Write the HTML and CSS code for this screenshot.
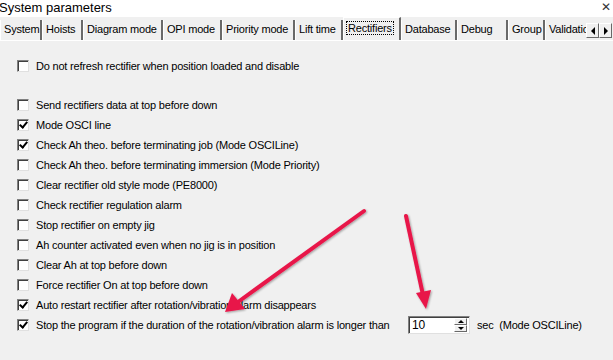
FILE: index.html
```html
<html>
    <head>
        <title>System parameters</title>
        <link rel="stylesheet" href="styles.css">
    </head>
    <body>
        <div class='titlebar'>
            <span class='title'>System parameters</span>
            <span class='close'>&#x2715;</span>
        </div>
        <div class='tabs'>
            <div class='tab' style='width:42px'>System</div>
            <div class='tab' style='width:41px'>Hoists</div>
            <div class='tab' style='width:80px'>Diagram mode</div>
            <div class='tab' style='width:59px'>OPI mode</div>
            <div class='tab' style='width:73px'>Priority mode</div>
            <div class='tab' style='width:48px'>Lift time</div>
            <div class='tab active' style='width:58px'><span class='focus'>Rectifiers</span></div>
            <div class='tab' style='width:56px'>Database</div>
            <div class='tab' style='width:51px'>Debug</div>
            <div class='tab' style='width:37px'>Group</div>
            <div class='tab last'>Validation</div>
            <div class='scroll'>
                <div class='sbtn'><span class='tri-left'></span></div>
                <div class='sbtn'><span class='tri-right'></span></div>
            </div>
        </div>
        <div class='panel'>
            <div class='row'><span class='box'></span>Do not refresh rectifier when position loaded and disable</div>
            <div class='spacer'></div>
            <div class='row'><span class='box'></span>Send rectifiers data at top before down</div>
            <div class='row'><span class='box checked'></span>Mode OSCI line</div>
            <div class='row'><span class='box checked'></span>Check Ah theo. before terminating job (Mode OSCILine)</div>
            <div class='row'><span class='box'></span>Check Ah theo. before terminating immersion (Mode Priority)</div>
            <div class='row'><span class='box'></span>Clear rectifier old style mode (PE8000)</div>
            <div class='row'><span class='box'></span>Check rectifier regulation alarm</div>
            <div class='row'><span class='box'></span>Stop rectifier on empty jig</div>
            <div class='row'><span class='box'></span>Ah counter activated even when no jig is in position</div>
            <div class='row'><span class='box'></span>Clear Ah at top before down</div>
            <div class='row'><span class='box'></span>Force rectifier On at top before down</div>
            <div class='row'><span class='box checked'></span>Auto restart rectifier after rotation/vibration alarm disappears</div>
            <div class='row'>
                <span class='box checked'></span>
                <span class='long'>Stop the program if the duration of the rotation/vibration alarm is longer than</span>
                <div class='spin'>
                    <span class='val'>10</span>
                    <div class='spin-btns'>
                        <div class='sb'><span class='tri-up'></span></div>
                        <div class='sb'><span class='tri-down'></span></div>
                    </div>
                </div>
                <span class='unit'>sec&nbsp; (Mode OSCILine)</span>
            </div>
        </div>
        <svg class='arrows' width='613' height='360' viewBox='0 0 613 360'>
            <defs>
                <filter id='sh' x='-20%' y='-20%' width='140%' height='140%'>
                    <feGaussianBlur in='SourceAlpha' stdDeviation='1.2'/>
                    <feOffset dx='1' dy='1'/>
                    <feComponentTransfer><feFuncA type='linear' slope='0.35'/></feComponentTransfer>
                    <feMerge><feMergeNode/><feMergeNode in='SourceGraphic'/></feMerge>
                </filter>
            </defs>
            <g filter='url(#sh)' fill='#e8174a' stroke='#e8174a'>
                <line x1='364' y1='211' x2='238' y2='302' stroke-width='4' stroke-linecap='round'/>
                <polygon points='225,312 232,293 245,309' stroke='none'/>
                <line x1='406' y1='216' x2='423' y2='295' stroke-width='4' stroke-linecap='round'/>
                <polygon points='426,309 416,293 431,290' stroke='none'/>
            </g>
        </svg>
    </body>
</html>
```

FILE: styles.css
```css
body{
    margin: 0;
    width: 613px;
    height: 360px;
    overflow: hidden;
    background-color: #f0f0f0;
    font-family: "Liberation Sans", Arial, sans-serif;
    font-size: 11px;
    letter-spacing: -0.2px;
    color: #000;
    position: relative;
}

.titlebar{
    height: 17px;
    display: flex;
    align-items: center;
    justify-content: space-between;
    background-color: #fff;
}
.title{
    font-size: 13px;
    letter-spacing: 0;
    margin-left: -1px;
    margin-top: -3px;
}
.close{
    font-size: 12px;
    margin-right: 2px;
    margin-top: -3px;
    color: #333;
}

.tabs{
    display: flex;
    height: 23px;
    align-items: flex-end;
    overflow: hidden;
    border-bottom: 1px solid #fff;
}
.tab{
    box-sizing: border-box;
    height: 20px;
    line-height: 18px;
    padding-left: 3px;
    border-right: 2px solid #696969;
    border-left: 1px solid #fff;
    white-space: nowrap;
    overflow: hidden;
    flex-shrink: 0;
}
.tab.active{
    height: 23px;
    line-height: 19px;
    padding-left: 2px;
    padding-top: 1px;
    border-top: 1px solid #fff;
}
.tab .focus{
    border: 1px dotted #000;
    padding: 0 1px;
}
.tab.last{
    width: 41px;
    border-right: none;
    text-overflow: clip;
}
.scroll{
    display: flex;
    margin-bottom: 2px;
    flex-shrink: 0;
}
.sbtn{
    width: 13px;
    height: 15px;
    box-sizing: border-box;
    border-top: 1px solid #fff;
    border-left: 1px solid #fff;
    border-right: 1px solid #696969;
    border-bottom: 1px solid #696969;
    display: flex;
    align-items: center;
    justify-content: center;
}
.tri-left{
    border-top: 4px solid transparent;
    border-bottom: 4px solid transparent;
    border-right: 4px solid #000;
}
.tri-right{
    border-top: 4px solid transparent;
    border-bottom: 4px solid transparent;
    border-left: 4px solid #000;
}

.panel{
    padding: 15px 0 0 17px;
}
.row{
    display: flex;
    align-items: center;
    height: 20px;
    white-space: nowrap;
}
.spacer{
    height: 19px;
}
.box{
    box-sizing: border-box;
    width: 12px;
    height: 12px;
    margin-right: 7px;
    background-color: #fff;
    border-top: 1px solid #808080;
    border-left: 1px solid #808080;
    border-right: 1px solid #e0e0e0;
    border-bottom: 1px solid #e0e0e0;
    box-shadow: inset 1px 1px 0 #404040;
    position: relative;
    flex-shrink: 0;
}
.box.checked::after{
    content: '';
    position: absolute;
    left: 3px;
    top: 0px;
    width: 3px;
    height: 6px;
    border-right: 2px solid #000;
    border-bottom: 2px solid #000;
    transform: rotate(40deg);
}

.long{
    width: 372px;
}
.spin{
    box-sizing: border-box;
    width: 62px;
    height: 18px;
    background-color: #fff;
    border-top: 1px solid #808080;
    border-left: 1px solid #808080;
    border-right: 1px solid #e0e0e0;
    border-bottom: 1px solid #e0e0e0;
    box-shadow: inset 1px 1px 0 #404040;
    display: flex;
    align-items: center;
    justify-content: space-between;
    padding: 1px 2px 1px 3px;
}
.val{
    font-size: 12px;
}
.spin-btns{
    display: flex;
    flex-direction: column;
    height: 14px;
}
.sb{
    width: 13px;
    height: 7px;
    box-sizing: border-box;
    background-color: #f0f0f0;
    border-top: 1px solid #fff;
    border-left: 1px solid #fff;
    border-right: 1px solid #696969;
    border-bottom: 1px solid #696969;
    display: flex;
    align-items: center;
    justify-content: center;
}
.tri-up{
    border-left: 3px solid transparent;
    border-right: 3px solid transparent;
    border-bottom: 3px solid #000;
}
.tri-down{
    border-left: 3px solid transparent;
    border-right: 3px solid transparent;
    border-top: 3px solid #000;
}
.unit{
    margin-left: 7px;
}

.arrows{
    position: absolute;
    top: 0;
    left: 0;
    pointer-events: none;
}
```
